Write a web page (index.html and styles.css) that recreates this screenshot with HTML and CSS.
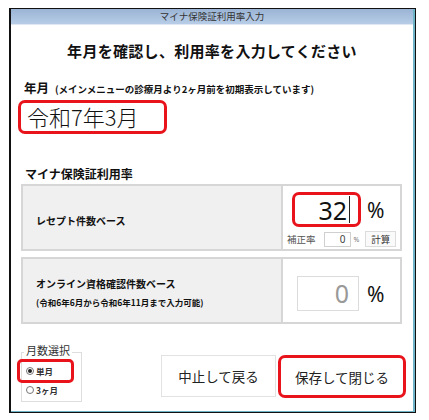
FILE: index.html
```html
<!DOCTYPE html>
<html lang="ja">
<head>
<meta charset="utf-8">
<title>マイナ保険証利用率入力</title>
<link rel="stylesheet" href="styles.css">
</head>
<body>
<div class="frame">
  <div class="window">
    <div class="titlebar">マイナ保険証利用率入力</div>
    <div class="heading">年月を確認し、利用率を入力してください</div>
    <div class="year-label"><span class="lbl">年月</span><span class="note">(メインメニューの診療月より2ヶ月前を初期表示しています)</span></div>
    <div class="year-box">令和7年3月</div>
    <div class="section-label">マイナ保険証利用率</div>
    <div class="rate-row">
      <div class="rate-name"><span>レセプト件数ベース</span></div>
      <div class="rate-input first">
        <div class="main-line">
          <div class="big-input hl"><span>32</span><span class="caret"></span></div>
          <span class="pct">%</span>
        </div>
        <div class="adj-line">
          <span class="adj-label">補正率</span>
          <span class="small-input">0</span>
          <span class="small-pct">%</span>
          <span class="calc-btn">計算</span>
        </div>
      </div>
    </div>
    <div class="rate-row second">
      <div class="rate-name col">
        <span class="line1">オンライン資格確認件数ベース</span>
        <span class="line2">(令和6年6月から令和6年11月まで入力可能)</span>
      </div>
      <div class="rate-input other">
        <div class="plain-input">0</div>
        <span class="pct">%</span>
      </div>
    </div>
    <div class="bottom">
      <fieldset class="months">
        <legend>月数選択</legend>
        <div class="radio-row hl"><span class="radio checked"></span><span class="rlabel">単月</span></div>
        <div class="radio-row plain"><span class="radio"></span><span class="rlabel">3ヶ月</span></div>
      </fieldset>
      <div class="btn cancel">中止して戻る</div>
      <div class="btn save">保存して閉じる</div>
    </div>
  </div>
</div>
</body>
</html>
```
FILE: styles.css
```css
html, body {
  margin: 0;
  padding: 0;
  background: #fff;
}
body {
  font-family: "Noto Sans CJK JP", "Noto Sans", sans-serif;
  color: #111;
}
.frame {
  margin: 8px 0 0 9px;
  width: 407px;
  height: 405px;
  box-sizing: border-box;
  border: 1px solid #111;
  border-left-width: 2px;
}
.window {
  height: 100%;
  box-sizing: border-box;
  border-right: 2px solid #6fb3c6;
  border-bottom: 1px solid #6fb3c6;
  background: #fff;
}
.titlebar {
  height: 15px;
  line-height: 15px;
  text-align: center;
  font-size: 9.5px;
  color: #333;
  background: linear-gradient(#9bb4d5, #b7cde7);
  border-bottom: 1px solid #dfe8f3;
}
.heading {
  margin-top: 16px;
  font-size: 15px;
  line-height: 20px;
  font-weight: 700;
  text-align: center;
  letter-spacing: 0.3px;
}
.year-label {
  margin-top: 20px;
  padding-left: 13px;
  display: flex;
  align-items: baseline;
  line-height: 14px;
}
.year-label .lbl {
  font-size: 12.5px;
  font-weight: 700;
}
.year-label .note {
  font-size: 9.5px;
  font-weight: 700;
  margin-left: 6px;
}
.year-box {
  margin: 4px 0 0 7px;
  width: 149px;
  height: 34px;
  box-sizing: border-box;
  border: 3px solid #e8131b;
  border-radius: 7px;
  padding-left: 6px;
  font-size: 22px;
  font-weight: 300;
  line-height: 27px;
}
.section-label {
  margin: 33px 0 0 14px;
  font-size: 12px;
  line-height: 14px;
  font-weight: 700;
}
.rate-row {
  margin: 3px 0 0 10px;
  width: 381px;
  height: 67px;
  box-sizing: border-box;
  border: 2px solid #d6d6d6;
  display: flex;
}
.rate-row.second {
  margin-top: 6px;
}
.rate-name {
  width: 260px;
  flex-shrink: 0;
  box-sizing: border-box;
  background: #f0f0f0;
  border-right: 2px solid #d6d6d6;
  display: flex;
  align-items: center;
  padding: 6px 0 0 13px;
  font-size: 10px;
  font-weight: 700;
}
.rate-name.col {
  flex-direction: column;
  align-items: flex-start;
  justify-content: center;
  padding-top: 4px;
}
.rate-name .line1 {
  font-size: 10px;
  line-height: 16px;
}
.rate-name .line2 {
  font-size: 8.5px;
  line-height: 14px;
  margin-top: 3px;
}
.rate-input {
  flex: 1;
  display: flex;
  white-space: nowrap;
}
.rate-input.first {
  flex-direction: column;
  padding-left: 9px;
}
.main-line {
  margin-top: 6px;
  display: flex;
  align-items: center;
}
.big-input {
  width: 69px;
  height: 35px;
  box-sizing: border-box;
  border: 3px solid #e8131b;
  border-radius: 7px;
  display: flex;
  justify-content: flex-end;
  align-items: center;
  padding-right: 8px;
  font-family: "Noto Sans", sans-serif;
  font-size: 25px;
  line-height: 28px;
}
.caret {
  width: 1px;
  height: 27px;
  background: #222;
  margin-left: 2px;
}
.pct {
  margin-left: 6px;
  font-family: "Noto Sans", sans-serif;
  font-size: 21px;
  line-height: 24px;
  color: #111;
}
.adj-line {
  margin-top: 4px;
  display: flex;
  align-items: center;
  height: 16px;
  padding-left: 4px;
  margin-left: -9px;
}
.adj-line > span {
  flex-shrink: 0;
}
.adj-label {
  font-size: 9.5px;
  color: #555;
}
.small-input {
  margin-left: 8px;
  width: 27px;
  height: 15px;
  box-sizing: border-box;
  border: 1px solid #d0d0d0;
  text-align: right;
  padding-right: 4px;
  font-family: "Noto Sans", sans-serif;
  font-size: 10px;
  line-height: 13px;
  color: #444;
}
.small-pct {
  margin-left: 3px;
  font-family: "Noto Sans", sans-serif;
  font-size: 7px;
  color: #777;
}
.calc-btn {
  margin-left: 6px;
  width: 31px;
  height: 16px;
  box-sizing: border-box;
  border: 1px solid #dcdcdc;
  background: #fafafa;
  font-size: 9.5px;
  line-height: 14px;
  text-align: center;
  color: #333;
}
.rate-input.other {
  align-items: center;
  padding: 6px 0 0 14px;
}
.plain-input {
  width: 62px;
  height: 35px;
  box-sizing: border-box;
  border: 1px solid #dcdcdc;
  text-align: right;
  padding-right: 9px;
  font-family: "Noto Sans", sans-serif;
  font-size: 25px;
  line-height: 32px;
  color: #999;
}
.rate-input.other .pct {
  margin-left: 8px;
}
.bottom {
  margin: 19px 0 0 10px;
  display: flex;
  align-items: flex-start;
}
.months {
  margin: 0;
  padding: 0;
  width: 61px;
  height: 59px;
  box-sizing: border-box;
  border: 1px solid #dedede;
}
.months legend {
  margin-left: 2px;
  padding: 0 2px 4px;
  font-size: 11px;
  line-height: 14px;
  color: #333;
}
.radio-row {
  display: flex;
  align-items: center;
  box-sizing: border-box;
}
.radio-row.hl {
  margin: -2px 0 0 -5px;
  width: 57px;
  height: 24px;
  border: 3px solid #e8131b;
  border-radius: 5px;
  padding-left: 6px;
}
.radio-row.plain {
  height: 14px;
  padding-left: 4px;
}
.radio {
  width: 8px;
  height: 8px;
  box-sizing: border-box;
  border: 1px solid #777;
  border-radius: 50%;
  display: flex;
  align-items: center;
  justify-content: center;
  background: #fff;
}
.radio.checked::after {
  content: "";
  width: 4px;
  height: 4px;
  border-radius: 50%;
  background: #222;
}
.rlabel {
  margin-left: 2px;
  font-size: 8.5px;
  font-weight: 700;
  line-height: 12px;
  color: #333;
}
.btn {
  margin-top: 12px;
  display: flex;
  align-items: center;
  justify-content: center;
  box-sizing: border-box;
  font-size: 13.5px;
  color: #222;
  background: #fff;
}
.btn.cancel {
  margin-left: 79px;
  width: 115px;
  height: 42px;
  border: 1px solid #e2e2e2;
}
.btn.save {
  margin-left: 2px;
  width: 128px;
  height: 43px;
  border: 3px solid #e8131b;
  border-radius: 7px;
}
```
